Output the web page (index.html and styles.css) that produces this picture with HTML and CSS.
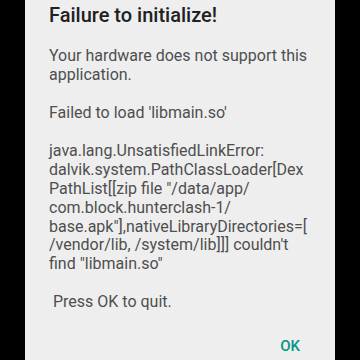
FILE: index.html
```html
<!DOCTYPE html>
<html>
<head>
<meta charset="utf-8">
<link rel="stylesheet" href="styles.css">
</head>
<body>
<div class="dialog">
  <h1 class="title">Failure to initialize!</h1>
  <p class="message">Your hardware does not support this<br>application.<br><br>Failed to load 'libmain.so'<br><br>java.lang.UnsatisfiedLinkError:<br>dalvik.system.PathClassLoader[Dex<br>PathList[[zip file "/data/app/<br>com.block.hunterclash-1/<br>base.apk"],nativeLibraryDirectories=[<br>/vendor/lib, /system/lib]]] couldn't<br>find "libmain.so"<br><br>&nbsp;Press OK to quit.</p>
  <div class="actions">
    <button class="ok">OK</button>
  </div>
</div>
</body>
</html>
```
FILE: styles.css
```css
html, body {
  margin: 0;
  padding: 0;
  background: #000;
  width: 360px;
  height: 360px;
  overflow: hidden;
}
.dialog {
  box-sizing: border-box;
  margin-left: 25px;
  width: 310px;
  height: 360px;
  background: #eeeeee;
  padding: 3px 24px 0 24px;
  font-family: Roboto, "Noto Sans", sans-serif;
}
.title {
  margin: 0;
  font-size: 20px;
  line-height: 24px;
  font-weight: 500;
  color: #212121;
}
.message {
  margin: 20.4px 0 0 0;
  font-size: 16px;
  line-height: 18.9px;
  color: #4e4e4e;
  white-space: nowrap;
}
.actions {
  display: flex;
  justify-content: flex-end;
  margin-top: 25.6px;
  padding-right: 11px;
}
.ok {
  border: 0;
  background: none;
  padding: 0;
  font-family: Roboto, "Noto Sans", sans-serif;
  font-size: 15px;
  line-height: 16px;
  font-weight: 500;
  color: #009688;
}
```
